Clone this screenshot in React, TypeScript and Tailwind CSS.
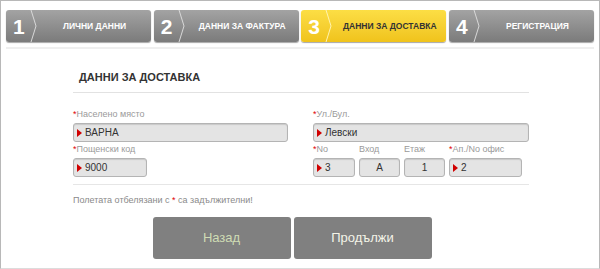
const steps = [
  { n: "1", label: "ЛИЧНИ ДАННИ", active: false },
  { n: "2", label: "ДАННИ ЗА ФАКТУРА", active: false },
  { n: "3", label: "ДАННИ ЗА ДОСТАВКА", active: true },
  { n: "4", label: "РЕГИСТРАЦИЯ", active: false },
];

function Marker() {
  return (
    <svg width="5" height="8" viewBox="0 0 5 8" className="shrink-0">
      <path d="M0 0 L5 4 L0 8 Z" fill="#d00000" />
    </svg>
  );
}

function Label({ text, req }: { text: string; req?: boolean }) {
  return (
    <div className="h-[12px] text-[9px] leading-[12px] text-[#9a9a9a]">
      {req && <span className="text-[#e00000]">*</span>}
      {text}
    </div>
  );
}

function Field({ value, w, marker = true, center = false }: { value: string; w: string; marker?: boolean; center?: boolean }) {
  return (
    <div
      className={`${w} mt-[3px] flex h-[19px] items-center gap-[3px] rounded-[3px] border border-[#b4b4b4] bg-[#e4e4e4] px-[3px] text-[10px] text-[#333] shadow-[inset_0_1px_1px_rgba(0,0,0,0.12)]`}
    >
      {marker && <Marker />}
      <span className={center ? "w-full text-center" : ""}>{value}</span>
    </div>
  );
}

export default function App() {
  return (
    <div className="h-[269px] w-[600px] overflow-hidden bg-white" style={{ fontFamily: '"Liberation Sans", Arial, sans-serif' }}>
      <div className="h-full border-x border-t border-b border-x-[#b8b8b8] border-t-[#b8b8b8] border-b-[#dcdcdc]">
        {/* Steps */}
        <div className="grid grid-cols-4 gap-[2.5px] px-[5px] pt-[9px]">
          {steps.map((s) => (
            <div
              key={s.n}
              className={`relative flex h-[32px] items-center rounded-[3px] shadow-[0_1px_1px_rgba(0,0,0,0.35)] ${
                s.active
                  ? "bg-gradient-to-b from-[#fcde44] to-[#f0c31a] text-[#333]"
                  : "bg-gradient-to-b from-[#a3a3a3] to-[#7b7b7b] text-white"
              }`}
            >
              <span className="w-[24px] pl-[7px] text-[21px] font-bold leading-none text-white">{s.n}</span>
              <svg width="8" height="32" viewBox="0 0 8 32" className="shrink-0">
                <polyline points="1,0 6,16 1,32" fill="none" stroke={s.active ? "#fff3b0" : "#d8d8d8"} strokeWidth="1" />
              </svg>
              <span className="flex-1 text-center text-[8.5px] font-bold">{s.label}</span>
            </div>
          ))}
        </div>
        <div className="mx-[5px] mt-[5px] h-[2px] bg-[#efefef]" />

        {/* Form */}
        <div className="ml-[72px] w-[456px]">
          <div className="mt-[21px] pl-[6px] text-[11px] font-bold leading-[14px] text-[#333]">ДАННИ ЗА ДОСТАВКА</div>
          <div className="mt-[8px] h-px bg-[#e2e2e2]" />

          <div className="mt-[15px] flex gap-[25px]">
            <div className="w-[215px]">
              <Label text="Населено място" req />
              <Field value="ВАРНА" w="w-[215px]" />
              <div className="mt-[1px]">
                <Label text="Пощенски код" req />
                <Field value="9000" w="w-[74px]" />
              </div>
            </div>
            <div className="w-[216px]">
              <Label text="Ул./Бул." req />
              <Field value="Левски" w="w-[216px]" />
              <div className="mt-[1px] flex gap-[4px]">
                <div>
                  <Label text="No" req />
                  <Field value="3" w="w-[42px]" />
                </div>
                <div>
                  <Label text="Вход" />
                  <Field value="A" w="w-[41px]" marker={false} center />
                </div>
                <div>
                  <Label text="Етаж" />
                  <Field value="1" w="w-[41px]" marker={false} center />
                </div>
                <div>
                  <Label text="Ап./No офис" req />
                  <Field value="2" w="w-[73px]" />
                </div>
              </div>
            </div>
          </div>

          <div className="mt-[7px] h-px bg-[#e6e6e6]" />
          <div className="mt-[9px] text-[9px] leading-[12px] text-[#8a8a8a]">
            Полетата отбелязани с <span className="text-[#e00000]">*</span> са задължителни!
          </div>
        </div>

        <div className="mt-[11px] flex justify-center gap-[3px] pr-[16px]">
          <button className="h-[42px] w-[138px] rounded-[3px] bg-[#808080] text-[13px] text-[#cfdcb4]">Назад</button>
          <button className="h-[42px] w-[138px] rounded-[3px] bg-[#808080] text-[13px] text-[#f4f4e8]">Продължи</button>
        </div>
      </div>
    </div>
  );
}
